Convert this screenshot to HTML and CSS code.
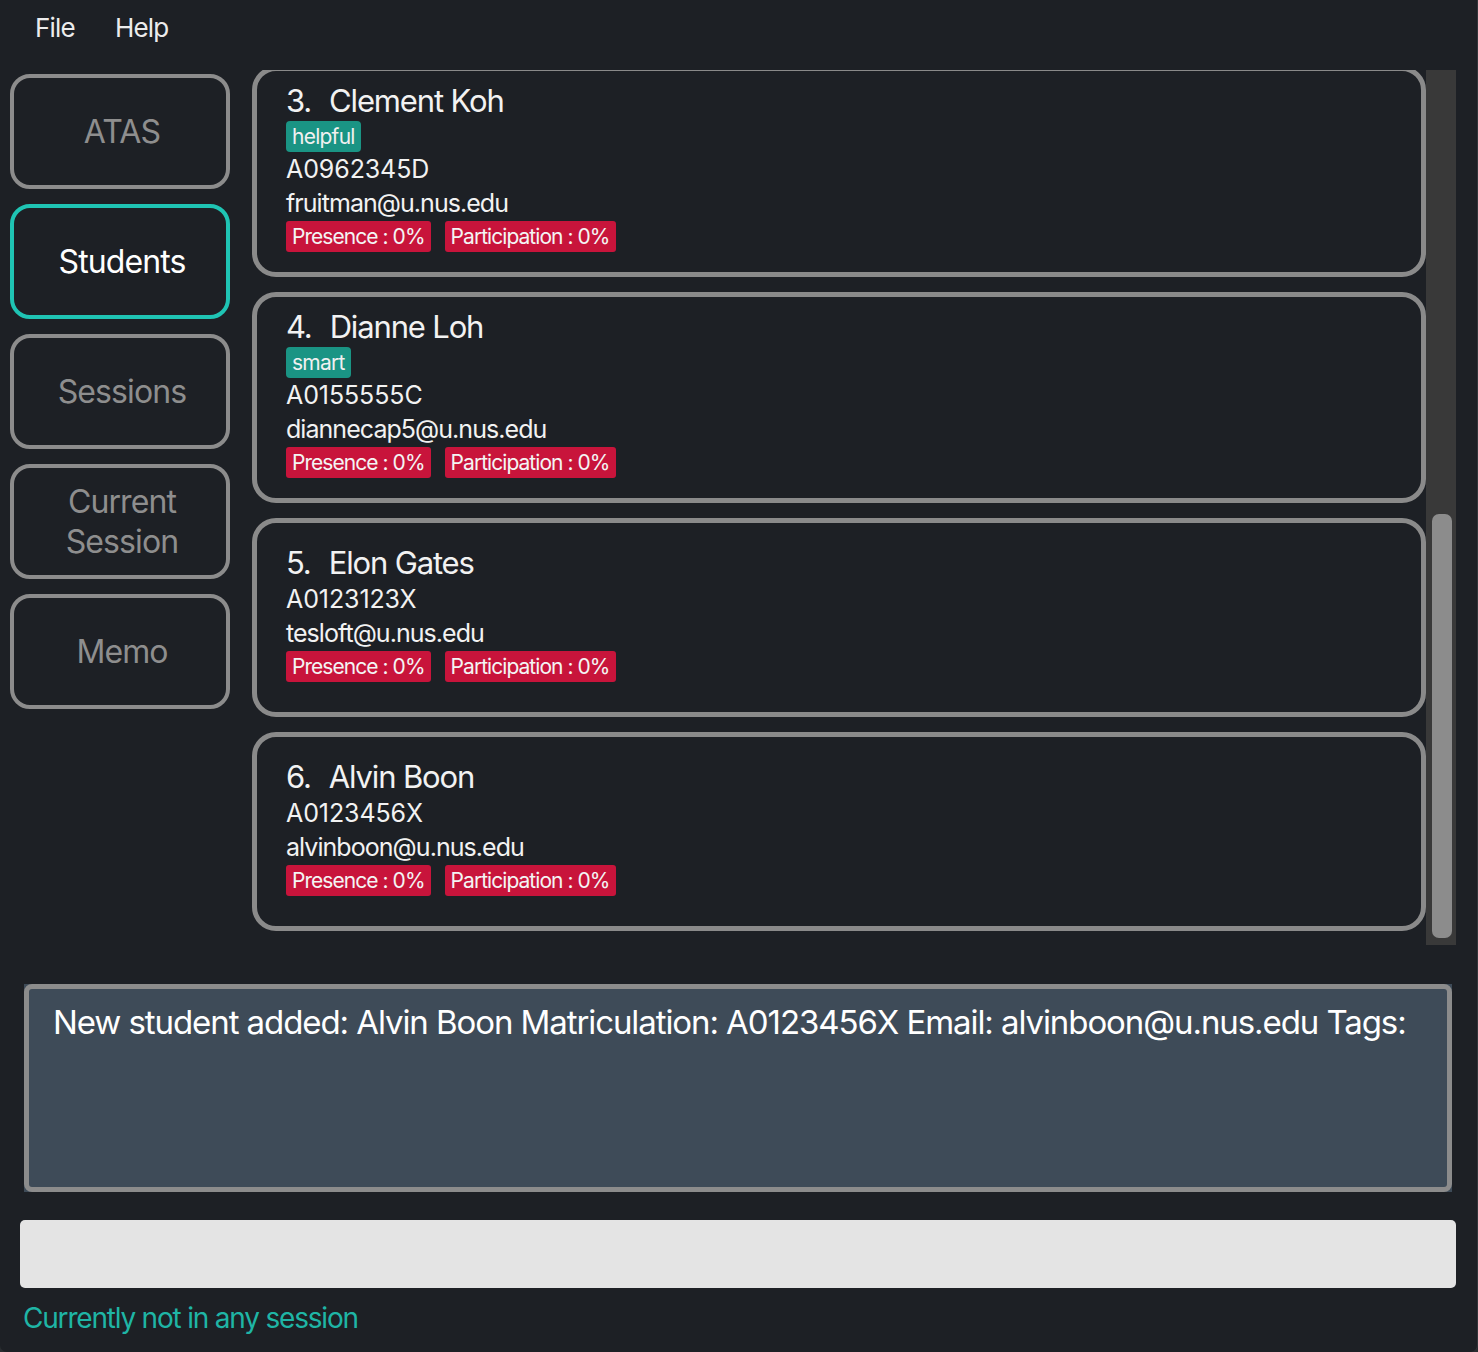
FILE: index.html
```html
<!DOCTYPE html>
<html>
<head>
<meta charset="utf-8">
<link rel="stylesheet" href="styles.css">
</head>
<body>
<div class="window">
  <div class="menubar">
    <span class="menu-item">File</span>
    <span class="menu-item">Help</span>
  </div>
  <div class="main">
    <nav class="sidebar">
      <div class="nav-btn">ATAS</div>
      <div class="nav-btn active">Students</div>
      <div class="nav-btn">Sessions</div>
      <div class="nav-btn">Current<br>Session</div>
      <div class="nav-btn">Memo</div>
    </nav>
    <div class="list-pane">
      <div class="list-viewport">
        <div class="card first">
          <div class="name"><span class="idx">3.</span>Clement Koh</div>
          <div class="tags"><span class="tag">helpful</span></div>
          <div class="line matric">A0962345D</div>
          <div class="line">fruitman@u.nus.edu</div>
          <div class="stats"><span class="stat">Presence : 0%</span><span class="stat">Participation : 0%</span></div>
        </div>
        <div class="card">
          <div class="name"><span class="idx">4.</span>Dianne Loh</div>
          <div class="tags"><span class="tag">smart</span></div>
          <div class="line matric">A0155555C</div>
          <div class="line">diannecap5@u.nus.edu</div>
          <div class="stats"><span class="stat">Presence : 0%</span><span class="stat">Participation : 0%</span></div>
        </div>
        <div class="card">
          <div class="name"><span class="idx">5.</span>Elon Gates</div>
          <div class="line matric">A0123123X</div>
          <div class="line">tesloft@u.nus.edu</div>
          <div class="stats"><span class="stat">Presence : 0%</span><span class="stat">Participation : 0%</span></div>
        </div>
        <div class="card">
          <div class="name"><span class="idx">6.</span>Alvin Boon</div>
          <div class="line matric">A0123456X</div>
          <div class="line">alvinboon@u.nus.edu</div>
          <div class="stats"><span class="stat">Presence : 0%</span><span class="stat">Participation : 0%</span></div>
        </div>
      </div>
      <div class="scroll-track"><div class="scroll-thumb"></div></div>
    </div>
  </div>
  <div class="result-box">
    <div class="result-inner">New student added: Alvin Boon Matriculation: A0123456X Email: alvinboon@u.nus.edu Tags:</div>
  </div>
  <div class="command-box"></div>
  <div class="status">Currently not in any session</div>
</div>
</body>
</html>
```
FILE: styles.css
```css
* { box-sizing: border-box; }
html, body {
  margin: 0;
  padding: 0;
  background: #2a2d31;
}
body {
  font-family: Inter, "Open Sans", "Noto Sans", sans-serif;
  color: #ffffff;
  width: 1478px;
  height: 1352px;
  overflow: hidden;
}
.window {
  display: flex;
  flex-direction: column;
  width: 1478px;
  height: 1352px;
  background: #1d2025;
  border-right: 1px solid #33363b;
  border-radius: 0 0 7px 7px;
}
.menubar {
  display: flex;
  gap: 40px;
  height: 56px;
  align-items: center;
  padding-left: 35px;
  padding-bottom: 2px;
}
.menu-item {
  font-size: 26px;
  color: #ececec;
  letter-spacing: -0.8px;
}
.main {
  display: flex;
  height: 875px;
  margin-top: 14px;
  padding-left: 10px;
}
.sidebar {
  width: 220px;
  display: flex;
  flex-direction: column;
  gap: 15px;
  padding-top: 4px;
}
.nav-btn {
  height: 115px;
  border: 4px solid #8c8c8c;
  border-radius: 20px;
  display: flex;
  align-items: center;
  justify-content: center;
  text-align: center;
  color: #8e8e8e;
  font-size: 32px;
  line-height: 40px;
  letter-spacing: -0.9px;
  padding-left: 4px;
}
.nav-btn.active {
  border-color: #1fc4b4;
  color: #ffffff;
}
.list-pane {
  display: flex;
  margin-left: 22px;
  width: 1204px;
  height: 875px;
}
.list-viewport {
  width: 1174px;
  height: 875px;
  overflow: hidden;
  display: flex;
  flex-direction: column;
  gap: 15px;
}
.card {
  flex: none;
  min-height: 199px;
  border: 5px solid #8a8a8a;
  border-radius: 24px;
  padding: 11px 30px 20px 29px;
  display: flex;
  flex-direction: column;
  justify-content: center;
}
.card.first {
  margin-top: -4px;
}
.name {
  font-size: 31px;
  line-height: 38px;
  color: #f2f2f2;
  letter-spacing: -1.15px;
}
.idx {
  margin-right: 18px;
}
.tags {
  margin-top: 1px;
  display: flex;
}
.tag {
  background: #1a9484;
  color: #f0f0f0;
  font-size: 21px;
  line-height: 31px;
  height: 31px;
  padding: 0 6px;
  border-radius: 4px;
  letter-spacing: -0.75px;
}
.line {
  font-size: 25px;
  line-height: 34px;
  color: #f2f2f2;
  letter-spacing: -0.95px;
}
.line.matric {
  letter-spacing: -0.1px;
}
.stats {
  margin-top: 1px;
  display: flex;
  gap: 14px;
}
.stat {
  background: #c8143b;
  color: #f4f4f4;
  font-size: 21px;
  line-height: 31px;
  height: 31px;
  padding: 0 6px;
  border-radius: 3px;
  letter-spacing: -0.95px;
}
.scroll-track {
  width: 30px;
  height: 875px;
  background: #393939;
  padding: 444px 4px 7px 6px;
}
.scroll-thumb {
  width: 20px;
  height: 424px;
  background: #8c8c8c;
  border-radius: 7px;
}
.result-box {
  margin-top: 39px;
  margin-left: 24px;
  width: 1428px;
  height: 208px;
  background: #3e4b58;
}
.result-inner {
  width: 100%;
  height: 100%;
  border: 5px solid #8c8c8c;
  border-radius: 8px;
  padding: 11px 24px;
  font-size: 33px;
  line-height: 44px;
  color: #ffffff;
  letter-spacing: -1.08px;
  white-space: nowrap;
}
.command-box {
  margin-top: 28px;
  margin-left: 20px;
  width: 1436px;
  height: 68px;
  background: #e4e4e4;
  border-radius: 5px;
}
.status {
  margin-left: 23px;
  margin-top: 12px;
  font-size: 28px;
  line-height: 36px;
  color: #1fb5a5;
  letter-spacing: -1.2px;
}
```
